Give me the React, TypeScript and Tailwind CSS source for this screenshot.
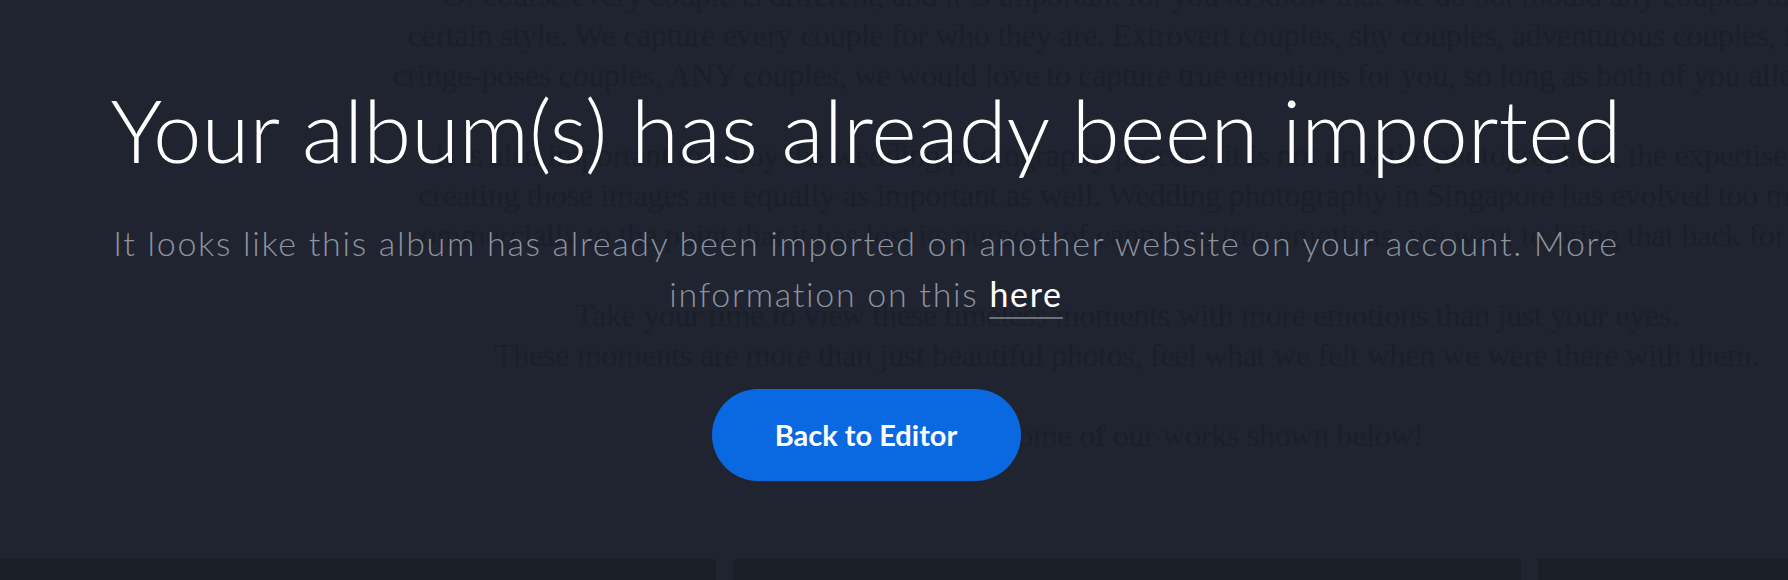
const pageParagraphs = [
  [
    "Of course every couple is different, and it is important for you to know that we do not mould any couples to a",
    "certain style. We capture every couple for who they are. Extrovert couples, shy couples, adventurous couples, fork-",
    "cringe-poses couples, ANY couples, we would love to capture true emotions for you, so long as both of you allow us.",
  ],
  [
    "It is also important to enjoy the wedding photography process, it is not only the photographers, the expertise in",
    "creating those images are equally as important as well. Wedding photography in Singapore has evolved too much",
    "commercially to the point that it has lost its purpose of capturing true emotions, we want to bring that back for you.",
  ],
  [
    "Take your time to view these timeless moments with more emotions than just your eyes.",
    "These moments are more than just beautiful photos, feel what we felt when we were there with them.",
  ],
  ["Do check out some of our works shown below!"],
];

const App = () => {
  return (
    <div className="relative w-full h-[580px] overflow-hidden bg-[#1f2430]">
      {/* site underneath the overlay */}
      <div className="w-[2254px] -mt-[25px] text-center text-[32px] leading-[40px] tracking-[-0.3px] text-[#1b1f28] font-['Liberation_Serif',serif]">
        {pageParagraphs.map((lines, i) => (
          <p key={i} className="mb-[40px] last:mb-0">
            {lines.map((line, j) => (
              <span key={j} className="block whitespace-nowrap">
                {line}
              </span>
            ))}
          </p>
        ))}
        <div className="flex gap-[17px] mt-[104px] h-[60px]">
          <div className="w-[716px] shrink-0 bg-[#1a1e27]" />
          <div className="w-[788px] shrink-0 bg-[#1b1f28]" />
          <div className="w-[716px] shrink-0 bg-[#1a1e27]" />
        </div>
      </div>

      {/* import notice */}
      <div className="absolute inset-0 w-[1732px] flex flex-col items-center pt-[86px] font-['Lato',sans-serif]">
        <h1 className="text-[87px] leading-none font-light text-white whitespace-nowrap">
          Your album(s) has already been imported
        </h1>
        <p className="mt-[44px] text-center text-[34px] leading-[51px] tracking-[1.7px] font-light text-[#8d939e] whitespace-nowrap">
          It looks like this album has already been imported on another website on your account. More
          <br />
          information on this{" "}
          <a className="text-white font-normal underline decoration-2 decoration-[#6b7079] underline-offset-[10px]">here</a>
        </p>
        <button className="mt-[70px] w-[309px] h-[92px] rounded-full bg-[#0a69e0] text-white text-[29px] font-bold">
          Back to Editor
        </button>
      </div>
    </div>
  );
};

export default App;
